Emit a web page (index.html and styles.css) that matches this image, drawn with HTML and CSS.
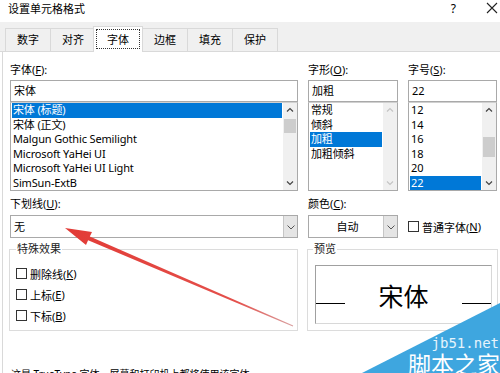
FILE: index.html
```html
<!DOCTYPE html>
<html lang="zh-CN">
<head>
    <meta charset="UTF-8">
    <title>设置单元格格式</title>
    <link rel="stylesheet" href="styles.css">
</head>
<body>
    <div class="titlebar">
        <span class="title">设置单元格格式</span>
        <span class="help">?</span>
        <svg class="close" width="12" height="12" viewBox="0 0 12 12"><path d="M1 1 L11 11 M11 1 L1 11" stroke="#222" stroke-width="1.1"/></svg>
    </div>

    <div class="tabs">
        <div class="tab">数字</div>
        <div class="tab">对齐</div>
        <div class="tab active"><span class="focus">字体</span></div>
        <div class="tab">边框</div>
        <div class="tab">填充</div>
        <div class="tab">保护</div>
    </div>

    <div class="page">
        <div class="grid">
            <!-- font -->
            <div class="field">
                <div class="label">字体(<u>F</u>):</div>
                <div class="input">宋体</div>
                <div class="list">
                    <div class="items">
                        <div class="item selected">宋体 (标题)</div>
                        <div class="item">宋体 (正文)</div>
                        <div class="item">Malgun Gothic Semilight</div>
                        <div class="item">Microsoft YaHei UI</div>
                        <div class="item">Microsoft YaHei UI Light</div>
                        <div class="item">SimSun-ExtB</div>
                    </div>
                    <div class="scrollbar">
                        <svg width="14" height="14" viewBox="0 0 14 14"><path d="M4 8.5 L7 5.5 L10 8.5" fill="none" stroke="#444" stroke-width="1.2"/></svg>
                        <div class="track"><div class="thumb thumb-top"></div></div>
                        <svg width="14" height="14" viewBox="0 0 14 14"><path d="M4 5.5 L7 8.5 L10 5.5" fill="none" stroke="#444" stroke-width="1.2"/></svg>
                    </div>
                </div>
            </div>

            <!-- style -->
            <div class="field">
                <div class="label">字形(<u>O</u>):</div>
                <div class="input">加粗</div>
                <div class="list">
                    <div class="items">
                        <div class="item">常规</div>
                        <div class="item">倾斜</div>
                        <div class="item selected">加粗</div>
                        <div class="item">加粗倾斜</div>
                    </div>
                    <div class="scrollbar">
                        <svg width="14" height="14" viewBox="0 0 14 14"><path d="M4 8.5 L7 5.5 L10 8.5" fill="none" stroke="#c4c4c4" stroke-width="1.2"/></svg>
                        <div class="track"></div>
                        <svg width="14" height="14" viewBox="0 0 14 14"><path d="M4 5.5 L7 8.5 L10 5.5" fill="none" stroke="#c4c4c4" stroke-width="1.2"/></svg>
                    </div>
                </div>
            </div>

            <!-- size -->
            <div class="field">
                <div class="label">字号(<u>S</u>):</div>
                <div class="input">22</div>
                <div class="list">
                    <div class="items">
                        <div class="item">12</div>
                        <div class="item">14</div>
                        <div class="item">16</div>
                        <div class="item">18</div>
                        <div class="item">20</div>
                        <div class="item selected">22</div>
                    </div>
                    <div class="scrollbar">
                        <svg width="14" height="14" viewBox="0 0 14 14"><path d="M4 8.5 L7 5.5 L10 8.5" fill="none" stroke="#444" stroke-width="1.2"/></svg>
                        <div class="track"><div class="thumb thumb-mid"></div></div>
                        <svg width="14" height="14" viewBox="0 0 14 14"><path d="M4 5.5 L7 8.5 L10 5.5" fill="none" stroke="#444" stroke-width="1.2"/></svg>
                    </div>
                </div>
            </div>

            <!-- underline -->
            <div class="field">
                <div class="label">下划线(<u>U</u>):</div>
                <div class="select">
                    <span class="value">无</span>
                    <span class="drop"><svg width="10" height="8" viewBox="0 0 10 8"><path d="M1.5 2.5 L5 6 L8.5 2.5" fill="none" stroke="#555" stroke-width="1"/></svg></span>
                </div>
            </div>

            <!-- colour -->
            <div class="field">
                <div class="label">颜色(<u>C</u>):</div>
                <div class="select">
                    <span class="value center">自动</span>
                    <span class="drop"><svg width="10" height="8" viewBox="0 0 10 8"><path d="M1.5 2.5 L5 6 L8.5 2.5" fill="none" stroke="#555" stroke-width="1"/></svg></span>
                </div>
            </div>

            <div class="normal">
                <span class="check"></span>普通字体(<u>N</u>)
            </div>

            <fieldset class="group effects">
                <legend>特殊效果</legend>
                <div class="option"><span class="check"></span>删除线(<u>K</u>)</div>
                <div class="option"><span class="check"></span>上标(<u>E</u>)</div>
                <div class="option"><span class="check"></span>下标(<u>B</u>)</div>
            </fieldset>

            <fieldset class="group preview">
                <legend>预览</legend>
                <div class="sample">
                    <span class="rule"></span>
                    <span class="sample-text">宋体</span>
                    <span class="rule"></span>
                </div>
            </fieldset>
        </div>

        <p class="note">这是 TrueType 字体。屏幕和打印机上都将使用该字体。</p>
    </div>

    <svg class="arrow" width="500" height="373" viewBox="0 0 500 373">
        <defs>
            <linearGradient id="fade" x1="65" y1="228" x2="293" y2="326" gradientUnits="userSpaceOnUse">
                <stop offset="0" stop-color="#e23b36"/>
                <stop offset="0.75" stop-color="#e4504b"/>
                <stop offset="1" stop-color="#d9a0a0"/>
            </linearGradient>
        </defs>
        <polygon points="65,228 92,232 89.8,236.5 293.2,325.5 292.8,326.5 88.1,240.2 86,245" fill="url(#fade)"/>
    </svg>

    <div class="watermark">
        <svg width="500" height="373" viewBox="0 0 500 373"><polygon points="500,303 500,373 362,373" fill="#3ea6df"/></svg>
        <span class="wm-site">jb51.net</span>
        <span class="wm-name">脚本之家</span>
    </div>
</body>
</html>
```

FILE: styles.css
```css
body {
    margin: 0;
    width: 500px;
    height: 373px;
    overflow: hidden;
    position: relative;
    background-color: #fff;
    font-family: "Noto Sans", "Noto Sans CJK SC", sans-serif;
    font-size: 11px;
    color: #000;
}

u {
    text-decoration: underline;
}

.titlebar {
    display: flex;
    align-items: center;
    height: 22px;
    padding: 0 0 6px 8px;
    box-sizing: border-box;
    background-color: #fff;
}

.title {
    flex: 1;
}

.help {
    font-size: 12px;
    margin-right: 30px;
}

.close {
    margin-right: 2px;
}

.tabs {
    display: flex;
    align-items: flex-end;
    height: 30px;
    padding-left: 5px;
    background-color: #f0f0f0;
    border-bottom: 1px solid #d9d9d9;
    box-sizing: border-box;
}

.tab {
    height: 22px;
    line-height: 21px;
    padding: 0 11px;
    border: 1px solid #d9d9d9;
    border-bottom: none;
    margin-right: -1px;
    background-color: #f0f0f0;
    font-family: "Noto Sans CJK SC", sans-serif;
}

.tab.active {
    height: 25px;
    line-height: 23px;
    padding: 0 2px;
    margin: 0 -1px -1px -2px;
    background-color: #fff;
    position: relative;
}

.focus {
    display: inline-block;
    padding: 0 10px;
    line-height: 18px;
    margin-top: 2px;
    border: 1px dotted #333;
}

.page {
    margin-left: 2px;
    border-left: 1px solid #d9d9d9;
    padding: 9px 0 0 7px;
}

.grid {
    display: grid;
    grid-template-columns: 288px 90px 89px;
    column-gap: 10px;
    row-gap: 4px;
}

.label {
    height: 18px;
    line-height: 18px;
}

.input {
    margin-top: 1px;
    height: 22px;
    line-height: 20px;
    border: 1px solid #a9a9a9;
    padding-left: 3px;
    box-sizing: border-box;
    background-color: #fff;
}

.list {
    display: flex;
    height: 89px;
    border: 1px solid #a9a9a9;
    border-top-color: #d0d0d0;
    box-sizing: border-box;
    background-color: #fff;
}

.items {
    flex: 1;
    padding: 0 1px;
}

.item {
    height: 14.5px;
    line-height: 14.5px;
    padding-left: 1px;
    white-space: nowrap;
    letter-spacing: -0.15px;
}

.item.selected {
    background-color: #0078d7;
    color: #fff;
}

.scrollbar {
    width: 14px;
    display: flex;
    flex-direction: column;
    background-color: #f0f0f0;
}

.track {
    flex: 1;
    position: relative;
}

.thumb {
    margin: 0 1px;
    background-color: #cdcdcd;
}

.thumb-top {
    height: 14px;
    margin-top: 2px;
}

.thumb-mid {
    height: 20px;
    margin-top: 20px;
}

.select {
    display: flex;
    margin-top: 2px;
    height: 23px;
    border: 1px solid #a9a9a9;
    box-sizing: border-box;
    background-color: #fff;
}

.value {
    flex: 1;
    line-height: 21px;
    padding-left: 3px;
}

.value.center {
    text-align: center;
}

.drop {
    width: 13px;
    display: flex;
    align-items: center;
    justify-content: center;
    background-color: #e5e5e5;
    border-left: 1px solid #c6c6c6;
}

.normal {
    align-self: end;
    display: flex;
    align-items: center;
    height: 23px;
}

.check {
    width: 11px;
    height: 11px;
    border: 1px solid #333;
    box-sizing: border-box;
    background-color: #fff;
    margin-right: 3px;
}

.group {
    margin: 0;
    border: 1px solid #dcdcdc;
    min-width: 0;
}

.group legend {
    padding: 0 1px;
    line-height: 14px;
    color: #222;
}

.effects {
    margin-left: -1px;
    padding: 7px 6px 4px 6px;
}

.option {
    display: flex;
    align-items: center;
    height: 21px;
}

.preview {
    grid-column: 2 / span 2;
    margin: 0 -1px;
    padding: 9px 5px 6px 7px;
}

.preview legend {
    margin-left: -2px;
}

.sample {
    display: flex;
    align-items: center;
    justify-content: space-between;
    height: 59px;
    border: 1px solid #a0a0a0;
    border-right-color: #d8d8d8;
    border-bottom-color: #d8d8d8;
    box-sizing: border-box;
    background-color: #fff;
}

.rule {
    width: 29px;
    height: 1px;
    margin-top: 18px;
    background-color: #000;
}

.sample-text {
    font-family: "Noto Sans CJK SC", sans-serif;
    font-size: 25px;
    line-height: 28px;
}

.note {
    margin: 35px 0 0 1px;
    font-size: 10px;
    line-height: 16px;
}

.arrow {
    position: absolute;
    left: 0;
    top: 0;
    pointer-events: none;
}

.watermark {
    position: absolute;
    left: 0;
    top: 0;
    width: 500px;
    height: 373px;
    pointer-events: none;
}

.watermark svg {
    position: absolute;
    left: 0;
    top: 0;
}

.wm-site {
    position: absolute;
    right: 1px;
    top: 336px;
    font-family: "DejaVu Sans Mono", monospace;
    font-size: 14px;
    line-height: 15px;
    color: #e6f4fc;
}

.wm-name {
    position: absolute;
    right: 0;
    top: 351px;
    font-family: "Noto Sans CJK SC", sans-serif;
    font-size: 23px;
    line-height: 24px;
    color: #fff;
}
```
